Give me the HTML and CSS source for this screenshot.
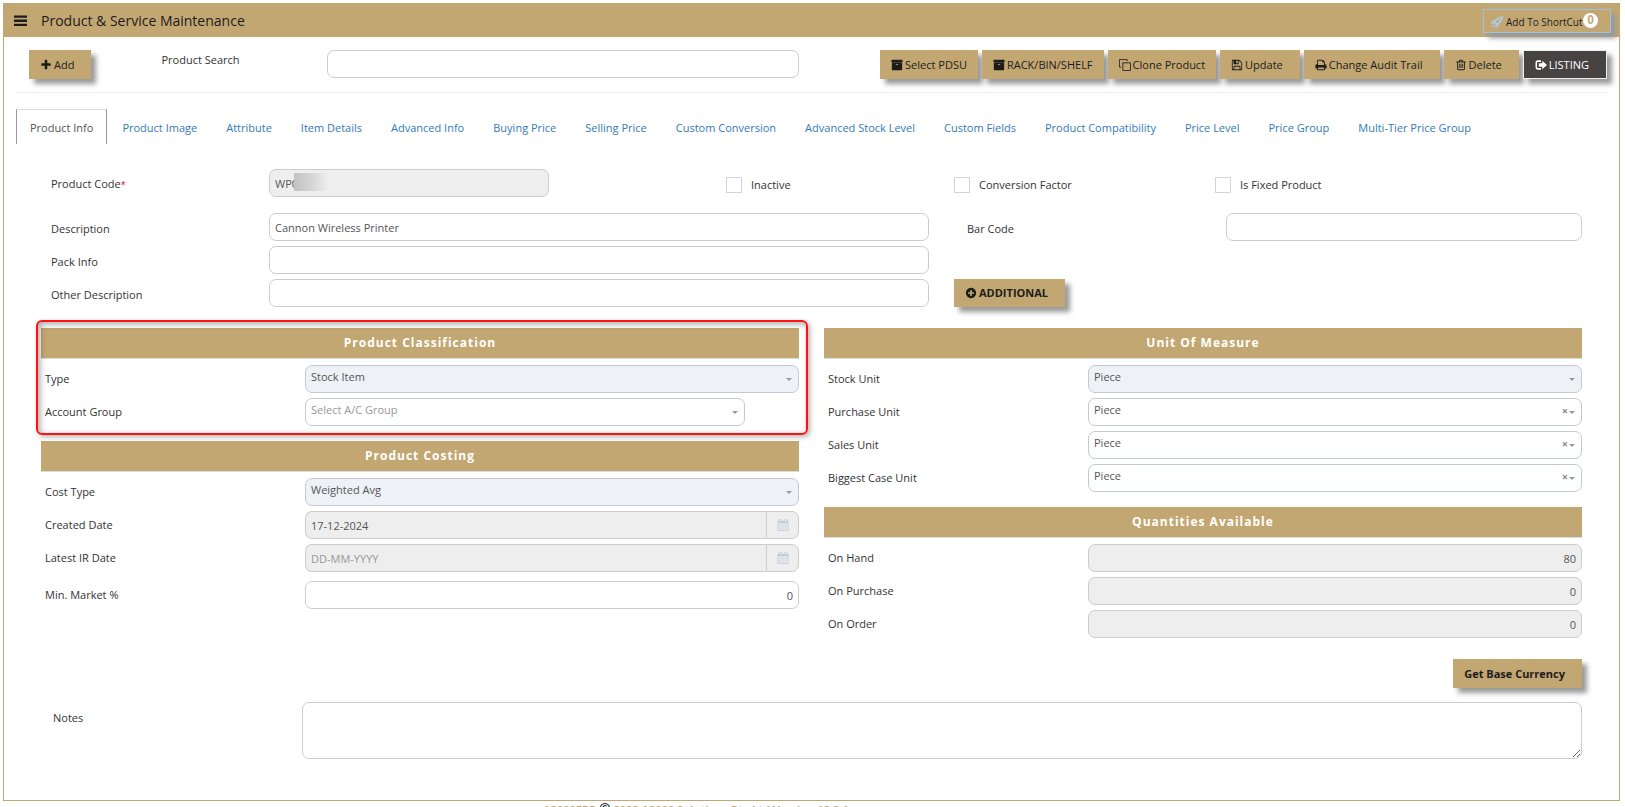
FILE: index.html
```html
<!DOCTYPE html>
<html lang="en">
<head>
  <meta charset="UTF-8" />
  <meta name="viewport" content="width=device-width, initial-scale=1.0"/>
  <title>Product &amp; Service Maintenance</title>
  <link rel="stylesheet" href="styles.css">
</head>
<body>
  <!-- Icon set -->
  <svg class="sprite" aria-hidden="true">
    <symbol id="i-bars" viewBox="0 0 14 14"><path d="M0 1.500h14v2.500H0zM0 6h14v2.500H0zM0 10.500h14v2.500H0z"/></symbol>
    <symbol id="i-plus" viewBox="0 0 1792 1792"><path d="M1600 736v192q0 40-28 68t-68 28h-416v416q0 40-28 68t-68 28h-192q-40 0-68-28t-28-68v-416h-416q-40 0-68-28t-28-68v-192q0-40 28-68t68-28h416v-416q0-40 28-68t68-28h192q40 0 68 28t28 68v416h416q40 0 68 28t28 68z"/></symbol>
    <symbol id="i-plus-circle" viewBox="0 0 1792 1792"><path d="M1344 960v-128q0-26-19-45t-45-19h-256v-256q0-26-19-45t-45-19h-128q-26 0-45 19t-19 45v256h-256q-26 0-45 19t-19 45v128q0 26 19 45t45 19h256v256q0 26 19 45t45 19h128q26 0 45-19t19-45v-256h256q26 0 45-19t19-45zm320-64q0 209-103 385.500t-279.500 279.500-385.500 103-385.500-103-279.500-279.500-103-385.500 103-385.500 279.500-279.500 385.500-103 385.500 103 279.500 279.500 103 385.500z"/></symbol>
    <symbol id="i-archive" viewBox="0 0 1792 1792"><path d="M1088 832q0-26-19-45t-45-19h-256q-26 0-45 19t-19 45 19 45 45 19h256q26 0 45-19t19-45zm576-192v960q0 26-19 45t-45 19h-1408q-26 0-45-19t-19-45v-960q0-26 19-45t45-19h1408q26 0 45 19t19 45zm64-448v256q0 26-19 45t-45 19h-1536q-26 0-45-19t-19-45v-256q0-26 19-45t45-19h1536q26 0 45 19t19 45z"/></symbol>
    <symbol id="i-clone" viewBox="0 0 14 14"><path d="M4.500 4.500h9v9h-9zM2.500 9.500h-2v-9h9v2" fill="none" stroke="currentColor" stroke-linejoin="round"/></symbol>
    <symbol id="i-save" viewBox="0 0 1792 1792"><path d="M512 1536h768v-384h-768v384zm896 0h128v-896q0-14-10-38.500t-20-34.500l-281-281q-10-10-34-20t-39-10v416q0 40-28 68t-68 28h-576q-40 0-68-28t-28-68v-416h-128v1280h128v-416q0-40 28-68t68-28h832q40 0 68 28t28 68v416zm-384-928v-320q0-13-9.500-22.500t-22.500-9.500h-192q-13 0-22.500 9.500t-9.500 22.500v320q0 13 9.500 22.500t22.500 9.500h192q13 0 22.500-9.500t9.500-22.500zm640 32v928q0 40-28 68t-68 28h-1344q-40 0-68-28t-28-68v-1344q0-40 28-68t68-28h928q40 0 88 20t76 48l280 280q28 28 48 76t20 88z"/></symbol>
    <symbol id="i-print" viewBox="0 0 1792 1792"><path d="M448 1536h896v-256h-896v256zm0-640h896v-384h-160q-40 0-68-28t-28-68v-160h-640v640zm1152 64q0-26-19-45t-45-19-45 19-19 45 19 45 45 19 45-19 19-45zm128 0v416q0 13-9.500 22.500t-22.500 9.500h-224v160q0 40-28 68t-68 28h-960q-40 0-68-28t-28-68v-160h-224q-13 0-22.500-9.500t-9.500-22.500v-416q0-79 56.500-135.500t135.500-56.500h64v-544q0-40 28-68t68-28h672q40 0 88 20t76 48l152 152q28 28 48 76t20 88v256h64q79 0 135.500 56.500t56.500 135.500z"/></symbol>
    <symbol id="i-trash" viewBox="0 0 1792 1792"><path d="M704 736v576q0 14-9 23t-23 9h-64q-14 0-23-9t-9-23v-576q0-14 9-23t23-9h64q14 0 23 9t9 23zm256 0v576q0 14-9 23t-23 9h-64q-14 0-23-9t-9-23v-576q0-14 9-23t23-9h64q14 0 23 9t9 23zm256 0v576q0 14-9 23t-23 9h-64q-14 0-23-9t-9-23v-576q0-14 9-23t23-9h64q14 0 23 9t9 23zm128 724v-948h-896v948q0 22 7 40.500t14.500 27 10.500 8.500h832q3 0 10.500-8.500t14.500-27 7-40.500zm-672-1076h448l-48-117q-7-9-17-11h-317q-10 2-17 11zm928 32v64q0 14-9 23t-23 9h-96v948q0 83-47 143.500t-113 60.500h-832q-66 0-113-58.500t-47-141.500v-952h-96q-14 0-23-9t-9-23v-64q0-14 9-23t23-9h309l70-167q15-37 54-63t79-26h320q40 0 79 26t54 63l70 167h309q14 0 23 9t9 23z"/></symbol>
    <symbol id="i-exit" viewBox="0 0 14 14"><path d="M7 2.500H3q-1.500 0-1.500 1.500v6q0 1.500 1.500 1.500h4" fill="none" stroke="currentColor" stroke-width="1.800"/><path d="M4.500 5h4V2L14 7l-5.500 5V9h-4z"/></symbol>
    <symbol id="i-calendar" viewBox="0 0 1792 1792"><path d="M192 1664h288v-288h-288v288zm352 0h320v-288h-320v288zm-352-352h288v-320h-288v320zm352 0h320v-320h-320v320zm-352-384h288v-288h-288v288zm736 736h320v-288h-320v288zm-384-736h320v-288h-320v288zm768 736h288v-288h-288v288zm-384-352h320v-320h-320v320zm-352-864v-288q0-13-9.500-22.500t-22.500-9.500h-64q-13 0-22.500 9.500t-9.500 22.500v288q0 13 9.500 22.500t22.500 9.500h64q13 0 22.500-9.500t9.500-22.500zm736 864h288v-320h-288v320zm-384-384h320v-288h-320v288zm384 0h288v-288h-288v288zm32-480v-288q0-13-9.500-22.500t-22.500-9.500h-64q-13 0-22.500 9.500t-9.500 22.500v288q0 13 9.500 22.500t22.500 9.500h64q13 0 22.500-9.500t9.500-22.500zm384-64v1280q0 52-38 90t-90 38h-1408q-52 0-90-38t-38-90v-1280q0-52 38-90t90-38h128v-96q0-66 47-113t113-47h64q66 0 113 47t47 113v96h384v-96q0-66 47-113t113-47h64q66 0 113 47t47 113v96h128q52 0 90 38t38 90z"/></symbol>
    <symbol id="i-rocket" viewBox="0 0 14 14"><path d="M4.500 7.500Q7 1.500 13 1q-.5 6-6.500 8.500zM5.500 5.500H3L1 8l3 .500M8.500 8.500V11L6 13l-.500-3M3.500 10l-2 2.500" fill="none" stroke="currentColor" stroke-width="1.600"/><circle cx="9.500" cy="4.500" r="1.200"/></symbol>
  </svg>

  <main class="page">
    <header class="titlebar">
      <button class="menu-btn" type="button" aria-label="Menu"><svg class="icon"><use href="#i-bars"/></svg></button>
      <h1>Product &amp; Service Maintenance</h1>
      <button class="shortcut" type="button"><svg class="icon"><use href="#i-rocket"/></svg>Add To ShortCut<span class="badge">0</span></button>
    </header>

    <div class="content">
      <div class="toolbar">
        <button class="btn btn-wide" type="button"><svg class="icon"><use href="#i-plus"/></svg>Add</button>
        <label class="search-label" for="search">Product Search</label>
        <input class="field search" id="search" type="text">
        <div class="actions">
          <button class="btn" type="button"><svg class="icon"><use href="#i-archive"/></svg>Select PDSU</button>
          <button class="btn" type="button"><svg class="icon"><use href="#i-archive"/></svg>RACK/BIN/SHELF</button>
          <button class="btn" type="button"><svg class="icon"><use href="#i-clone"/></svg>Clone Product</button>
          <button class="btn btn-wide" type="button"><svg class="icon"><use href="#i-save"/></svg>Update</button>
          <button class="btn btn-wide" type="button"><svg class="icon"><use href="#i-print"/></svg>Change Audit Trail</button>
          <button class="btn btn-wide" type="button"><svg class="icon"><use href="#i-trash"/></svg>Delete</button>
          <button class="btn btn-wide btn-dark" type="button"><svg class="icon"><use href="#i-exit"/></svg>LISTING</button>
        </div>
      </div>

      <nav class="tabs">
        <a class="active" href="#info">Product Info</a>
        <a href="#image">Product Image</a>
        <a href="#attribute">Attribute</a>
        <a href="#details">Item Details</a>
        <a href="#advanced">Advanced Info</a>
        <a href="#buying">Buying Price</a>
        <a href="#selling">Selling Price</a>
        <a href="#conversion">Custom Conversion</a>
        <a href="#stock">Advanced Stock Level</a>
        <a href="#fields">Custom Fields</a>
        <a href="#compat">Product Compatibility</a>
        <a href="#level">Price Level</a>
        <a href="#group">Price Group</a>
        <a href="#tier">Multi-Tier Price Group</a>
      </nav>

      <form class="form" id="info">
        <div class="general">
          <div class="code-row">
            <label for="code">Product Code<span class="required">*</span></label>
            <div class="code-box">
              <input class="field" id="code" type="text" value="WP0" readonly>
              <span class="mask"></span>
            </div>
            <label class="check"><input type="checkbox">Inactive</label>
            <label class="check"><input type="checkbox">Conversion Factor</label>
            <label class="check"><input type="checkbox">Is Fixed Product</label>
          </div>
          <div class="desc-row">
            <label for="desc">Description</label>
            <input class="field" id="desc" type="text" value="Cannon Wireless Printer">
            <label class="barcode-label" for="barcode">Bar Code</label>
            <input class="field" id="barcode" type="text">
          </div>
          <div class="desc-row">
            <label for="pack">Pack Info</label>
            <input class="field" id="pack" type="text">
          </div>
          <div class="desc-row">
            <label for="other">Other Description</label>
            <input class="field" id="other" type="text">
            <button class="btn btn-bold btn-wide" type="button"><svg class="icon"><use href="#i-plus-circle"/></svg>ADDITIONAL</button>
          </div>
        </div>

        <div class="columns">
          <div class="column">
            <section class="panel highlight">
              <h2>Product Classification</h2>
              <div class="row">
                <label for="type">Type</label>
                <div class="select"><select class="field" id="type" disabled><option>Stock Item</option></select></div>
              </div>
              <div class="row">
                <label for="account">Account Group</label>
                <div class="select short"><select class="field empty" id="account"><option>Select A/C Group</option></select></div>
              </div>
            </section>
            <section class="panel">
              <h2>Product Costing</h2>
              <div class="row">
                <label for="cost">Cost Type</label>
                <div class="select"><select class="field" id="cost" disabled><option>Weighted Avg</option></select></div>
              </div>
              <div class="row">
                <label for="created">Created Date</label>
                <div class="date"><input class="field" id="created" type="text" value="17-12-2024" readonly><button type="button" aria-label="Pick created date"><svg class="icon"><use href="#i-calendar"/></svg></button></div>
              </div>
              <div class="row">
                <label for="latest">Latest IR Date</label>
                <div class="date"><input class="field" id="latest" type="text" placeholder="DD-MM-YYYY" readonly><button type="button" aria-label="Pick latest IR date"><svg class="icon"><use href="#i-calendar"/></svg></button></div>
              </div>
              <div class="row market">
                <label for="market">Min. Market %</label>
                <input class="field number" id="market" type="text" value="0">
              </div>
            </section>
          </div>

          <div class="column">
            <section class="panel">
              <h2>Unit Of Measure</h2>
              <div class="row">
                <label for="stockunit">Stock Unit</label>
                <div class="select"><select class="field" id="stockunit" disabled><option>Piece</option></select></div>
              </div>
              <div class="row">
                <label for="purchaseunit">Purchase Unit</label>
                <div class="select"><select class="field" id="purchaseunit"><option>Piece</option></select><button class="clear" type="button" aria-label="Clear">×</button></div>
              </div>
              <div class="row">
                <label for="salesunit">Sales Unit</label>
                <div class="select"><select class="field" id="salesunit"><option>Piece</option></select><button class="clear" type="button" aria-label="Clear">×</button></div>
              </div>
              <div class="row">
                <label for="caseunit">Biggest Case Unit</label>
                <div class="select"><select class="field" id="caseunit"><option>Piece</option></select><button class="clear" type="button" aria-label="Clear">×</button></div>
              </div>
            </section>
            <section class="panel">
              <h2>Quantities Available</h2>
              <div class="row">
                <label for="onhand">On Hand</label>
                <input class="field number" id="onhand" type="text" value="80" readonly>
              </div>
              <div class="row">
                <label for="onpurchase">On Purchase</label>
                <input class="field number" id="onpurchase" type="text" value="0" readonly>
              </div>
              <div class="row">
                <label for="onorder">On Order</label>
                <input class="field number" id="onorder" type="text" value="0" readonly>
              </div>
            </section>
            <button class="btn btn-bold btn-wide currency" type="button">Get Base Currency</button>
          </div>
        </div>

        <div class="notes">
          <label for="notes">Notes</label>
          <textarea class="field" id="notes"></textarea>
        </div>
      </form>
    </div>
  </main>

  <footer>A2000ERP <span class="copy">©</span> 2022 A2000 Solutions Pte Ltd Version 12.2.1</footer>
</body>
</html>
```
FILE: styles.css
```css
* {
  box-sizing: border-box;
}

body {
  margin: 0;
  height: 100vh;
  overflow: hidden;
  font-family: 'Segoe UI', 'Open Sans', 'Noto Sans', sans-serif;
  font-size: 11px;
  line-height: 16px;
  color: #333;
  background: #fff;
}

button, input, select, textarea {
  font: inherit;
  color: inherit;
}

.sprite {
  position: absolute;
  width: 0;
  height: 0;
}

.icon {
  width: 12px;
  height: 12px;
  fill: currentColor;
  flex: none;
}

.page {
  margin: 3px 5px 0 3px;
  border: 1px solid #c3a772;
}

.titlebar {
  display: flex;
  align-items: center;
  height: 33px;
  padding: 0 8px 0 10px;
  background: #c3a772;
  color: #1c1c1c;
}

.titlebar h1 {
  flex: 1;
  margin: 0 0 0 14px;
  font-size: 14px;
  font-weight: 400;
}

.menu-btn {
  display: flex;
  padding: 0;
  border: 0;
  background: none;
}

.menu-btn .icon {
  width: 13px;
  height: 13px;
}

.shortcut {
  position: relative;
  display: flex;
  align-items: center;
  gap: 3px;
  width: 128px;
  height: 24px;
  padding: 2px 7px 0;
  border: 1px solid #9cc3dc;
  background: #c3a772;
  box-shadow: 5px 5px 5px #999;
  font-size: 10px;
  white-space: nowrap;
}

.shortcut .icon {
  color: #a9cdea;
}

.badge {
  position: absolute;
  top: 3px;
  right: 12px;
  width: 15px;
  height: 15px;
  border-radius: 50%;
  background: #fff;
  color: #c3a772;
  font: bold 12px/15px 'Liberation Sans', sans-serif;
  text-align: center;
}

.content {
  padding: 13px 12px 41px;
}

.toolbar {
  display: flex;
  height: 43px;
  padding-left: 13px;
  border-bottom: 1px solid #eee;
}

.search-label {
  width: 166px;
  margin-left: 70px;
  padding-top: 2px;
}

.search.field {
  width: 472px;
}

.actions {
  display: flex;
  gap: 4px;
  margin-left: auto;
}

.btn {
  display: flex;
  align-items: center;
  gap: 2px;
  height: 29px;
  padding: 0 11px;
  border: 0;
  background: #c3a772;
  box-shadow: 5px 5px 5px #999;
  color: #1c1c1c;
  white-space: nowrap;
}

.btn-wide {
  padding-right: 17px;
}

.btn-bold {
  font-weight: 700;
}

.btn-dark {
  border: 1px solid #eee;
  background: #474343;
  color: #fff;
}

.tabs {
  display: flex;
  gap: 1px;
  margin-top: 16px;
}

.tabs a {
  padding: 10px 13px 8px;
  border: 1px solid transparent;
  border-bottom: 0;
  color: #337ab7;
  text-decoration: none;
  white-space: nowrap;
}

.tabs .active {
  border-color: #ddd #999 #999;
  color: #555;
}

.form {
  padding: 25px 25px 0;
}

.field {
  display: block;
  width: 100%;
  min-width: 0;
  height: 28px;
  padding: 0 5px;
  border: 1px solid #ccc;
  border-radius: 7px;
  background: #fff;
  color: #555;
}

.field[readonly] {
  background: #eee;
}

.field::placeholder {
  color: #999;
}

.number {
  text-align: right;
}

.general {
  display: grid;
  gap: 5px;
  padding-left: 10px;
}

.code-row,
.desc-row {
  display: grid;
  grid-template-columns: 218fr 660fr 25fr 272fr 356fr;
  align-items: center;
}

.code-row {
  grid-template-columns: 218fr 280fr 177fr 228fr 261fr 367fr;
  margin-bottom: 11px;
}

.code-row > label,
.desc-row label {
  padding-top: 3px;
}

.code-row .check:nth-of-type(2) {
  grid-column: 4;
}

.code-box {
  position: relative;
}

.mask {
  position: absolute;
  top: 4px;
  left: 25px;
  width: 34px;
  height: 18px;
  background: linear-gradient(to right, #c2c2c2, #d4d4d4 50%, #eee);
}

.required {
  color: #e00;
  font-size: 9px;
}

.check {
  display: flex;
  align-items: center;
  gap: 9px;
}

.check input {
  appearance: none;
  width: 16px;
  height: 16px;
  margin: 0;
  border: 1px solid #d5d5d5;
  background: #fff;
}

.desc-row .barcode-label {
  grid-column: 4;
  padding-left: 13px;
}

.desc-row .btn {
  grid-column: 4;
  justify-self: start;
  height: 28px;
}

.columns {
  display: grid;
  grid-template-columns: 1fr 1fr;
  gap: 25px;
  margin-top: 21px;
}

.panel {
  position: relative;
  display: grid;
  gap: 5px;
  margin-bottom: 15px;
}

.panel h2 {
  margin: 0 0 1px;
  padding: 7px 0;
  border-bottom: 1px solid #ddd;
  background: #c3a772;
  color: #fff;
  font-size: 12px;
  font-weight: 700;
  letter-spacing: 1px;
  text-align: center;
}

.row {
  display: grid;
  grid-template-columns: 264fr 494fr;
  align-items: center;
}

.row label {
  padding-left: 4px;
}

.market {
  margin-top: 4px;
}

/* red frame around the first panel */
.highlight::after {
  content: '';
  position: absolute;
  inset: -8px -9px -9px -5px;
  border: 2px solid #f11;
  border-radius: 6px;
  box-shadow: 2px 2px 5px rgba(0,0,0,0.3), inset 2px 2px 6px rgba(0,0,0,0.35);
  pointer-events: none;
}

.select {
  position: relative;
}

.select.short {
  width: 89%;
}

.select .field {
  appearance: none;
  padding-bottom: 4px;
  border-color: #c2cad8;
  opacity: 1;
}

.select .field:disabled {
  background: #eef1f5;
}

.select .empty {
  color: #999;
}

.select::after {
  content: '';
  position: absolute;
  top: 13px;
  right: 7px;
  border: 3px solid transparent;
  border-top-color: #999;
}

.clear {
  position: absolute;
  top: 5px;
  right: 14px;
  padding: 0;
  border: 0;
  background: none;
  color: #888;
  font-weight: 700;
}

.date {
  display: flex;
}

.date .field {
  border-right: 0;
  border-radius: 7px 0 0 7px;
}

.date button {
  display: flex;
  align-items: center;
  justify-content: center;
  width: 33px;
  flex: none;
  border: 1px solid #ccc;
  border-radius: 0 7px 7px 0;
  background: #eee;
  color: #c2cad8;
}

.currency {
  margin: 21px 0 0 auto;
}

.notes {
  display: grid;
  grid-template-columns: 261fr 1280fr;
  margin-top: 14px;
}

.notes label {
  padding: 8px 0 0 12px;
}

.notes .field {
  height: 57px;
}

footer {
  padding: 1px 0 0 543px;
  color: #c3a772;
  font-weight: 700;
  white-space: nowrap;
}

.copy {
  color: #222;
  font-size: 14px;
  line-height: 1;
}
```
